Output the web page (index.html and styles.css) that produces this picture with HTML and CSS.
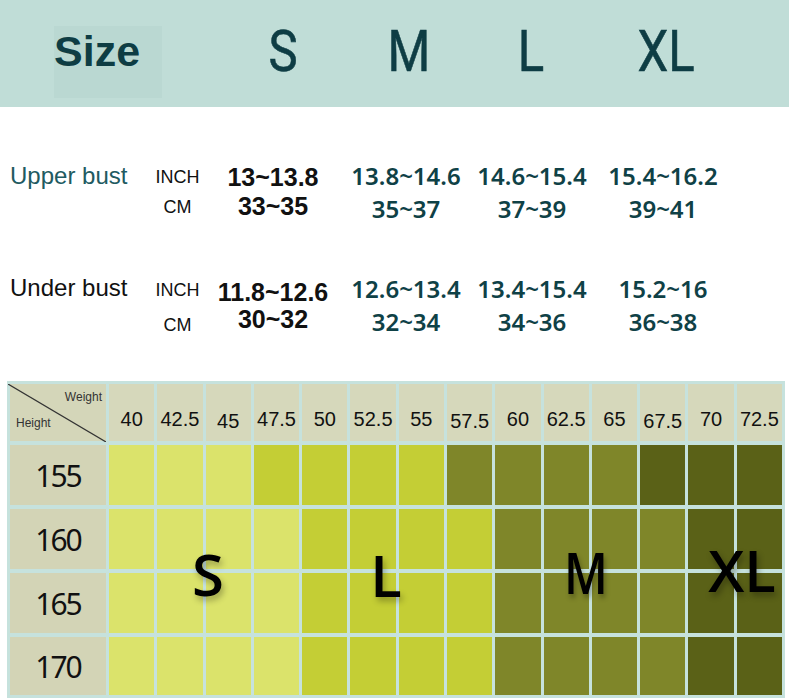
FILE: index.html
```html
<!DOCTYPE html>
<html>
<head>
<meta charset="utf-8">
<link rel="stylesheet" href="styles.css">
</head>
<body>
<header class="topbar">
  <div></div>
  <div class="size-box">Size</div>
  <div></div>
  <div class="sz">S</div>
  <div class="sz">M</div>
  <div class="sz">L</div>
  <div class="sz">XL</div>
</header>

<section class="measures">
  <div class="mrow upper">
    <div class="mlabel teal">Upper bust</div>
    <div class="units"><span>INCH</span><span>CM</span></div>
    <div class="val first"><span>13~13.8</span><span>33~35</span></div>
    <div class="val tealval"><span>13.8~14.6</span><span>35~37</span></div>
    <div class="val tealval"><span>14.6~15.4</span><span>37~39</span></div>
    <div class="val tealval"><span>15.4~16.2</span><span>39~41</span></div>
  </div>
  <div class="mrow under">
    <div class="mlabel">Under bust</div>
    <div class="units"><span>INCH</span><span>CM</span></div>
    <div class="val first"><span>11.8~12.6</span><span>30~32</span></div>
    <div class="val tealval"><span>12.6~13.4</span><span>32~34</span></div>
    <div class="val tealval"><span>13.4~15.4</span><span>34~36</span></div>
    <div class="val tealval"><span>15.2~16</span><span>36~38</span></div>
  </div>
</section>

<section class="chart">
  <div class="corner">
    <svg class="diag" width="98" height="58" viewBox="0 0 98 58"><line x1="0" y1="0" x2="98" y2="58" stroke="#333" stroke-width="1.2"/></svg>
    <span class="w-lab">Weight</span>
    <span class="h-lab">Height</span>
  </div>
  <div class="wt">40</div><div class="wt">42.5</div><div class="wt low">45</div><div class="wt">47.5</div><div class="wt">50</div><div class="wt">52.5</div><div class="wt">55</div><div class="wt low">57.5</div><div class="wt">60</div><div class="wt">62.5</div><div class="wt">65</div><div class="wt low">67.5</div><div class="wt">70</div><div class="wt">72.5</div>

  <div class="ht">155</div>
  <div class="c s"></div><div class="c s"></div><div class="c s"></div><div class="c l"></div><div class="c l"></div><div class="c l"></div><div class="c l"></div><div class="c m"></div><div class="c m"></div><div class="c m"></div><div class="c m"></div><div class="c xl"></div><div class="c xl"></div><div class="c xl"></div>

  <div class="ht">160</div>
  <div class="c s"></div><div class="c s"></div><div class="c s"></div><div class="c s"></div><div class="c l"></div><div class="c l"></div><div class="c l"></div><div class="c l"></div><div class="c m"></div><div class="c m"></div><div class="c m"></div><div class="c m"></div><div class="c xl"></div><div class="c xl"></div>

  <div class="ht">165</div>
  <div class="c s"></div><div class="c s"></div><div class="c s"></div><div class="c s"></div><div class="c l"></div><div class="c l"></div><div class="c l"></div><div class="c l"></div><div class="c m"></div><div class="c m"></div><div class="c m"></div><div class="c m"></div><div class="c xl"></div><div class="c xl"></div>

  <div class="ht">170</div>
  <div class="c s"></div><div class="c s"></div><div class="c s"></div><div class="c s"></div><div class="c l"></div><div class="c l"></div><div class="c l"></div><div class="c l"></div><div class="c m"></div><div class="c m"></div><div class="c m"></div><div class="c m"></div><div class="c xl"></div><div class="c xl"></div>

  <span class="big big-s">S</span>
  <span class="big big-l">L</span>
  <span class="big big-m">M</span>
  <span class="big big-xl">XL</span>
</section>
</body>
</html>
```

FILE: styles.css
```css
html, body {
  margin: 0;
  padding: 0;
  background: #ffffff;
}

body {
  width: 789px;
  height: 699px;
  overflow: hidden;
  font-family: "Liberation Sans", Arial, sans-serif;
}

/* ---------- top band ---------- */
.topbar {
  height: 107px;
  background: #c0ddd7;
  display: grid;
  grid-template-columns: 54px 108px 60px 122px 130px 114px 156px;
  align-items: center;
}

.size-box {
  align-self: start;
  margin-top: 26px;
  height: 72px;
  box-sizing: border-box;
  padding-top: 4px;
  background: #bad8d2;
  font-family: "Liberation Sans", Arial, sans-serif;
  font-weight: 700;
  font-size: 43px;
  line-height: 43px;
  color: #0e3d44;
}

.sz {
  text-align: center;
  font-family: Roboto, "Liberation Sans", sans-serif;
  font-weight: 400;
  font-size: 57px;
  line-height: 60px;
  margin-top: -4px;
  color: #0e3d44;
  -webkit-text-stroke: 0.6px #0e3d44;
  transform: scaleX(0.86);
}

/* ---------- measurement rows ---------- */
.measures {
  padding-top: 52px;
  height: 274px;
  box-sizing: border-box;
}

.mrow {
  display: grid;
  grid-template-columns: 10px 140px 55px 136px 130px 122px 140px;
  height: 66px;
}

.mrow::before {
  content: "";
}

.mrow.under {
  margin-top: 46px;
}

.mlabel {
  font-size: 24px;
  line-height: 33px;
  color: #111;
  white-space: nowrap;
}

.mlabel.teal {
  color: #215a61;
}

.units {
  display: flex;
  flex-direction: column;
  align-items: center;
  font-size: 18px;
  line-height: 30px;
  padding-top: 3px;
  color: #111;
}

.under .units {
  line-height: 35px;
  padding-top: 2px;
}

.val {
  display: flex;
  flex-direction: column;
  align-items: center;
  white-space: nowrap;
}

.val.first {
  font-weight: 700;
  font-size: 25px;
  line-height: 29px;
  padding-top: 4px;
  color: #111;
}

.under .val.first {
  line-height: 27px;
  padding-top: 8px;
}

.val.tealval {
  font-family: "Noto Sans", "Open Sans", sans-serif;
  font-weight: 600;
  font-size: 24px;
  line-height: 33px;
  color: #0f4146;
}

.under .val.tealval {
  padding-top: 1px;
}

/* ---------- chart ---------- */
.chart {
  position: relative;
  margin-left: 7px;
  width: 778px;
  box-sizing: border-box;
  padding: 3px;
  background: #c6e2dd;
  display: grid;
  grid-template-columns: 96px repeat(14, 1fr);
  grid-template-rows: 57px 60px 60px 60px 58px;
  column-gap: 3px;
  row-gap: 4px;
}

.corner {
  position: relative;
  background: #d4d6b9;
  font-size: 12px;
  color: #333;
}

.diag {
  position: absolute;
  left: -2px;
  top: 0;
}

.w-lab {
  position: absolute;
  right: 4px;
  top: 6px;
}

.h-lab {
  position: absolute;
  left: 6px;
  bottom: 11px;
}

.wt {
  background: #d6d8bb;
  display: flex;
  justify-content: center;
  align-items: flex-start;
  padding-top: 24px;
  font-size: 20px;
  line-height: 23px;
  color: #111;
  white-space: nowrap;
}

.wt.low {
  padding-top: 26px;
}

.ht {
  background: #d3d4b6;
  display: flex;
  justify-content: center;
  align-items: center;
  font-family: "Noto Sans", "Open Sans", sans-serif;
  font-size: 30px;
  letter-spacing: -2px;
  color: #111;
}

.c.s  { background: #dbe36b; }
.c.l  { background: #c4ce35; }
.c.m  { background: #7f8629; }
.c.xl { background: #5a6117; }

.big {
  position: absolute;
  font-family: "Open Sans", "Noto Sans", sans-serif;
  font-weight: 600;
  font-size: 58px;
  line-height: 1;
  color: #000;
  text-shadow: 2px 4px 6px rgba(0, 0, 0, 0.3);
  transform: translate(-50%, -50%);
}

.big-s  { left: 201px; top: 193px; }
.big-l  { left: 379px; top: 194px; }
.big-m  { left: 579px; top: 191px; transform: translate(-50%, -50%) scaleX(0.82); }
.big-xl { left: 735px; top: 189px; }
```
